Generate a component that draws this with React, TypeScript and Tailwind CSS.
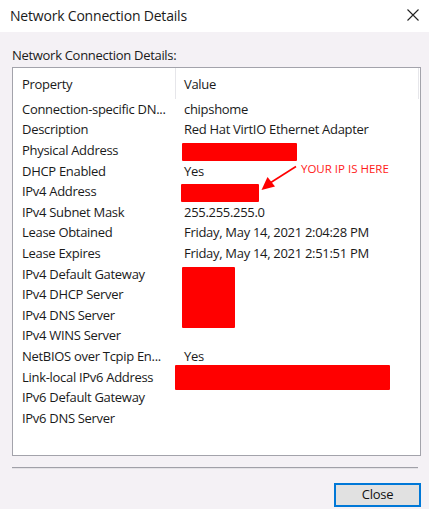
import React from "react";

const rows: { name: string; value?: string }[] = [
  { name: "Connection-specific DN...", value: "chipshome" },
  { name: "Description", value: "Red Hat VirtIO Ethernet Adapter" },
  { name: "Physical Address" },
  { name: "DHCP Enabled", value: "Yes" },
  { name: "IPv4 Address" },
  { name: "IPv4 Subnet Mask", value: "255.255.255.0" },
  { name: "Lease Obtained", value: "Friday, May 14, 2021 2:04:28 PM" },
  { name: "Lease Expires", value: "Friday, May 14, 2021 2:51:51 PM" },
  { name: "IPv4 Default Gateway" },
  { name: "IPv4 DHCP Server" },
  { name: "IPv4 DNS Server" },
  { name: "IPv4 WINS Server" },
  { name: "NetBIOS over Tcpip En...", value: "Yes" },
  { name: "Link-local IPv6 Address" },
  { name: "IPv6 Default Gateway" },
  { name: "IPv6 DNS Server" },
];

export default function App() {
  return (
    <div
      className="relative w-[429px] h-[509px] overflow-hidden bg-[#f4f1f5] text-[#1a1a1a]"
      style={{ fontFamily: '"Open Sans", "Noto Sans", sans-serif' }}
    >
      {/* title bar */}
      <div className="h-[32px] bg-white flex items-center justify-between pl-[10px] pr-[9px]">
        <span className="text-[14px] tracking-[-0.2px] -mt-[2px]">Network Connection Details</span>
        <svg width="12" height="12" viewBox="0 0 12 12" className="mr-[1px] -mt-[2px]">
          <path d="M0.5 0.5 L11.5 11.5 M11.5 0.5 L0.5 11.5" stroke="#222" strokeWidth="1.1" />
        </svg>
      </div>

      <div className="pl-[12px] pr-[8px]">
        <div className="h-[35px] flex items-end pb-[2px] text-[13px] tracking-[-0.3px]">
          Network Connection Details:
        </div>

        {/* list view */}
        <div className="relative h-[389px] border border-[#a3a3ab] bg-white">
          <div className="flex h-[31px] items-center text-[13px] tracking-[-0.3px]">
            <div className="w-[163px] pl-[9px] pt-[2px] border-r border-[#e6e6ea] h-full flex items-center">Property</div>
            <div className="flex-1 pl-[8px] pt-[2px] border-r border-[#e6e6ea] h-full flex items-center mr-[1px]">Value</div>
          </div>
          <div>
            {rows.map((r) => (
              <div key={r.name} className="flex h-[20.6px] items-center text-[13px] tracking-[-0.3px] leading-none">
                <div className="w-[162px] pl-[9px] whitespace-nowrap">{r.name}</div>
                <div className="pl-[9px] whitespace-nowrap">{r.value ?? ""}</div>
              </div>
            ))}
          </div>

          {/* redacted fields */}
          <div className="absolute left-[169px] top-[75px] w-[115px] h-[18px] bg-[#ff0000] rounded-[1px]" />
          <div className="absolute left-[168px] top-[116px] w-[78px] h-[18px] bg-[#ff0000] rounded-[1px]" />
          <div className="absolute left-[169px] top-[199px] w-[53px] h-[61px] bg-[#ff0000] rounded-[1px]" />
          <div className="absolute left-[162px] top-[297px] w-[215px] h-[25px] bg-[#ff0000] rounded-[1px]" />

          {/* annotation */}
          <svg className="absolute left-[246px] top-[97px]" width="40" height="30" viewBox="0 0 40 30">
            <path d="M37 1.5 L11 18" stroke="#ff0000" strokeWidth="1.6" />
            <path d="M2.5 25 L8.5 12 L16 21.5 Z" fill="#ff0000" />
          </svg>
          <div className="absolute left-[288px] top-[92px] text-[11.5px] text-[#ff1a1a] tracking-[0px] whitespace-nowrap">
            YOUR IP IS HERE
          </div>
        </div>

        {/* separator */}
        <div className="mt-[11px] h-[2px] w-[406px] border-t border-[#a0a0a8] bg-[#e4e2e6]" />

        <div className="flex justify-end mt-[14px]">
          <button className="w-[87px] h-[24px] bg-[#e1e1e1] border-2 border-[#0078d7] text-[13px] tracking-[-0.3px] text-[#111] flex items-center justify-center">
            Close
          </button>
        </div>
      </div>
    </div>
  );
}
